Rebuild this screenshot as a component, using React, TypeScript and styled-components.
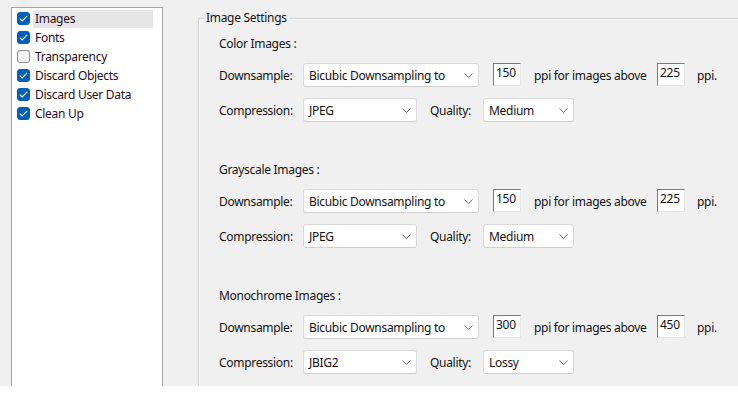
import React, { FC } from "react";
import styled, { createGlobalStyle } from "styled-components";

const GlobalStyle = createGlobalStyle`
  html, body {
    margin: 0;
    padding: 0;
    background: #ffffff;
  }
  body {
    font-family: "Noto Sans", "Liberation Sans", sans-serif;
    font-size: 12px;
    letter-spacing: -0.3px;
    color: #121212;
  }
`;

const Window = styled.div`
  width: 738px;
  height: 405px;
  display: flex;
  flex-direction: column;
  background: #ffffff;
`;

const Dialog = styled.div`
  height: 386px;
  background: #f0f0f0;
  display: flex;
  overflow: hidden;
  padding: 7px 0 0 11px;
  box-sizing: border-box;
`;

const ListBox = styled.ul`
  list-style: none;
  margin: 0;
  padding: 1px 9px 0 5px;
  width: 152px;
  height: 400px;
  box-sizing: border-box;
  background: #ffffff;
  border: 1px solid #a3a3a3;
  flex-shrink: 0;
`;

const ListItem = styled.li`
  height: 19px;
  display: flex;
  align-items: center;
  gap: 3px;
`;

const CheckBox = styled.span<{ $checked: boolean }>`
  width: 13px;
  height: 13px;
  box-sizing: border-box;
  border-radius: 3px;
  flex-shrink: 0;
  display: flex;
  align-items: center;
  justify-content: center;
  background: ${(p) => (p.$checked ? "#005fb8" : "#f6f6f6")};
  border: 1px solid ${(p) => (p.$checked ? "#005fb8" : "#8a8a8a")};
`;

const ItemLabel = styled.span<{ $selected: boolean }>`
  flex: 1;
  height: 18px;
  line-height: 18px;
  padding-left: 2px;
  color: #2a0c1c;
  background: ${(p) => (p.$selected ? "#e6e6e6" : "transparent")};
`;

const GroupBox = styled.fieldset`
  margin: 3px 0 0 35px;
  padding: 0 0 0 20px;
  flex: 1;
  height: 420px;
  border: none;
  border-top: 1px solid #d3d3d3;
  border-left: 1px solid #d3d3d3;
  box-shadow: inset 1px 1px 0 #fafafa;
  min-width: 0;
`;

const Legend = styled.legend`
  margin-left: -14px;
  padding: 0 2px 0 1px;
  font-size: 12px;
  line-height: 16px;
  color: #121212;
`;

const Section = styled.div`
  display: flex;
  flex-direction: column;
  margin-top: 10px;
  margin-bottom: 40px;
`;

const SectionTitle = styled.div`
  height: 16px;
  line-height: 16px;
  margin-bottom: 11px;
`;

const Row = styled.div`
  display: flex;
  align-items: center;
  height: 24px;
  & + & {
    margin-top: 11px;
  }
`;

const FieldLabel = styled.span<{ $width: number }>`
  width: ${(p) => p.$width}px;
  flex-shrink: 0;
  white-space: nowrap;
`;

const Select = styled.div<{ $width: number }>`
  width: ${(p) => p.$width}px;
  height: 24px;
  box-sizing: border-box;
  flex-shrink: 0;
  background: #ffffff;
  border: 1px solid #d9d9d9;
  border-bottom-color: #cfcfcf;
  border-radius: 3px;
  display: flex;
  align-items: center;
  justify-content: space-between;
  padding: 0 5px 0 5px;
  white-space: nowrap;
`;

const NumberBox = styled.div`
  width: 28px;
  height: 23px;
  box-sizing: border-box;
  flex-shrink: 0;
  background: #ffffff;
  border-top: 1px solid #7a7a7a;
  border-left: 1px solid #7a7a7a;
  border-right: 1px solid #e6e6e6;
  border-bottom: 1px solid #e6e6e6;
  padding: 0 0 0 2px;
  line-height: 18px;
  margin-top: -1px;
`;

const Gap = styled.span<{ $width: number }>`
  width: ${(p) => p.$width}px;
  flex-shrink: 0;
`;

const Chevron: FC = () => (
  <svg width="9" height="5" viewBox="0 0 9 5" fill="none">
    <path d="M0.5 0.5 L4.5 4.5 L8.5 0.5" stroke="#6b6b6b" strokeWidth="1" />
  </svg>
);

const Check: FC = () => (
  <svg width="9" height="7" viewBox="0 0 9 7" fill="none">
    <path d="M0.8 3.6 L3.2 5.9 L8.2 0.9" stroke="#ffffff" strokeWidth="1.1" />
  </svg>
);

const Dropdown: FC<{ width: number; value: string }> = ({ width, value }) => (
  <Select $width={width}>
    <span>{value}</span>
    <Chevron />
  </Select>
);

type ImageSectionProps = {
  title: string;
  resolution: string;
  threshold: string;
  compression: string;
  quality: string;
};

const ImageSection: FC<ImageSectionProps> = (props) => (
  <Section>
    <SectionTitle>{props.title}</SectionTitle>
    <Row>
      <FieldLabel $width={84}>Downsample:</FieldLabel>
      <Dropdown width={176} value="Bicubic Downsampling to" />
      <Gap $width={14} />
      <NumberBox>{props.resolution}</NumberBox>
      <Gap $width={13} />
      <FieldLabel $width={123}>ppi for images above</FieldLabel>
      <NumberBox>{props.threshold}</NumberBox>
      <Gap $width={12} />
      <FieldLabel $width={30}>ppi.</FieldLabel>
    </Row>
    <Row>
      <FieldLabel $width={84}>Compression:</FieldLabel>
      <Dropdown width={114} value={props.compression} />
      <Gap $width={13} />
      <FieldLabel $width={53}>Quality:</FieldLabel>
      <Dropdown width={91} value={props.quality} />
    </Row>
  </Section>
);

const items = [
  { label: "Images", checked: true },
  { label: "Fonts", checked: true },
  { label: "Transparency", checked: false },
  { label: "Discard Objects", checked: true },
  { label: "Discard User Data", checked: true },
  { label: "Clean Up", checked: true },
];

const sections: ImageSectionProps[] = [
  { title: "Color Images :", resolution: "150", threshold: "225", compression: "JPEG", quality: "Medium" },
  { title: "Grayscale Images :", resolution: "150", threshold: "225", compression: "JPEG", quality: "Medium" },
  { title: "Monochrome Images :", resolution: "300", threshold: "450", compression: "JBIG2", quality: "Lossy" },
];

const App: FC = () => (
  <>
    <GlobalStyle />
    <Window>
      <Dialog>
        <ListBox>
          {items.map((item, i) => (
            <ListItem key={item.label}>
              <CheckBox $checked={item.checked}>{item.checked && <Check />}</CheckBox>
              <ItemLabel $selected={i === 0}>{item.label}</ItemLabel>
            </ListItem>
          ))}
        </ListBox>
        <GroupBox>
          <Legend>Image Settings</Legend>
          {sections.map((s) => (
            <ImageSection key={s.title} {...s} />
          ))}
        </GroupBox>
      </Dialog>
    </Window>
  </>
);

export default App;
